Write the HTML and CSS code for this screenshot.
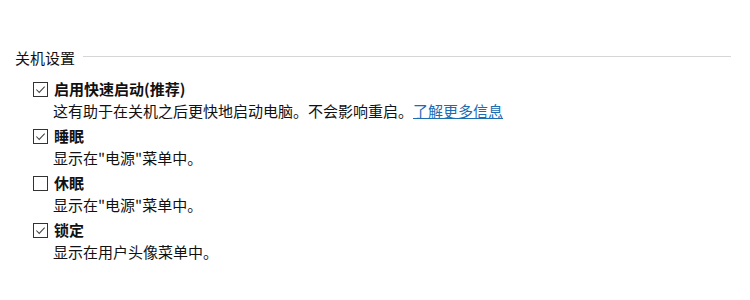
FILE: index.html
```html
<!DOCTYPE html>
<html>
<head>
<meta charset="utf-8">
<link rel="stylesheet" href="styles.css">
</head>
<body>
<div class="panel">
  <div class="group-title">
    <span>关机设置</span>
    <div class="rule"></div>
  </div>

  <div class="option">
    <div class="opt-head">
      <span class="box checked"><svg viewBox="0 0 14 14"><path d="M2.5 7 L5.6 10.2 L11.5 4" /></svg></span>
      <span class="opt-label">启用快速启动(推荐)</span>
    </div>
    <div class="opt-desc">这有助于在关机之后更快地启动电脑。不会影响重启。<a href="#" class="more">了解更多信息</a></div>
  </div>

  <div class="option">
    <div class="opt-head">
      <span class="box checked"><svg viewBox="0 0 14 14"><path d="M2.5 7 L5.6 10.2 L11.5 4" /></svg></span>
      <span class="opt-label">睡眠</span>
    </div>
    <div class="opt-desc">显示在"电源"菜单中。</div>
  </div>

  <div class="option">
    <div class="opt-head">
      <span class="box"></span>
      <span class="opt-label">休眠</span>
    </div>
    <div class="opt-desc">显示在"电源"菜单中。</div>
  </div>

  <div class="option">
    <div class="opt-head">
      <span class="box checked"><svg viewBox="0 0 14 14"><path d="M2.5 7 L5.6 10.2 L11.5 4" /></svg></span>
      <span class="opt-label">锁定</span>
    </div>
    <div class="opt-desc">显示在用户头像菜单中。</div>
  </div>
</div>
</body>
</html>
```

FILE: styles.css
```css
* {
  box-sizing: border-box;
}

body {
  margin: 0;
  background-color: #ffffff;
  color: #111111;
  font-family: "Noto Sans CJK SC", "Noto Sans", sans-serif;
  font-size: 15px;
}

.panel {
  padding: 47px 19px 0 15px;
}

.group-title {
  display: flex;
  align-items: center;
  gap: 8px;
  height: 22px;
  line-height: 22px;
  margin-bottom: 9px;
}

.rule {
  flex: 1;
  height: 1px;
  margin-top: -3px;
  background-color: #d6d6d6;
}

.option {
  padding-left: 18px;
  margin-bottom: 3px;
}

.opt-head {
  display: flex;
  align-items: center;
  gap: 6px;
  height: 22px;
}

.box {
  width: 15px;
  height: 15px;
  border: 1px solid #333333;
  background-color: #fff;
  display: inline-block;
}

.box svg {
  display: block;
  width: 13px;
  height: 13px;
  fill: none;
  stroke: #444444;
  stroke-width: 1.1;
}

.opt-label {
  font-weight: bold;
  line-height: 22px;
}

.opt-desc {
  padding-left: 20px;
  line-height: 22px;
}

.more {
  color: #1a6db3;
  text-decoration: underline;
}
```
